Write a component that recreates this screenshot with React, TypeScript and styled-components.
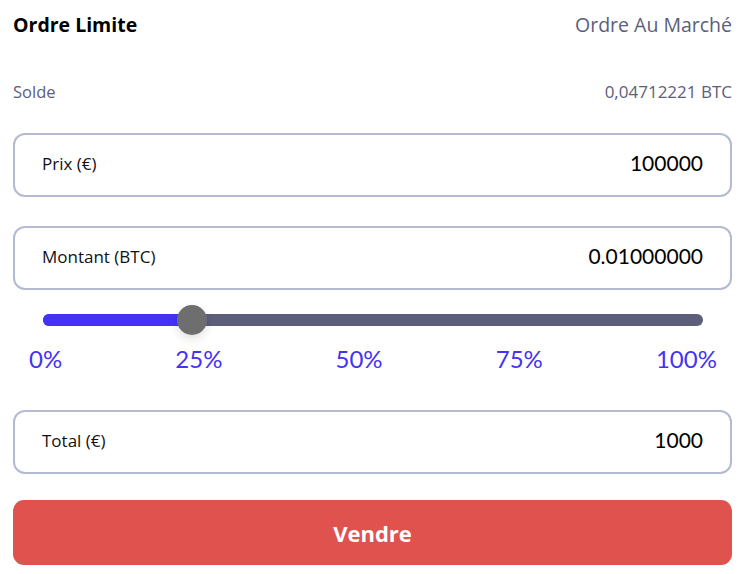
import { useState } from 'react'
import styled, { createGlobalStyle } from 'styled-components'

const GlobalStyle = createGlobalStyle`
	html, body {
		margin: 0;
		padding: 0;
		background: #ffffff;
	}

	* {
		box-sizing: border-box;
	}
`

const OrderWrapper = styled.div`
	width: 744px;
	padding: 0 12px 0 13px;
	display: flex;
	flex-direction: column;
	font-family: 'Open Sans', 'Liberation Sans', sans-serif;
`

const Row = styled.div<{ $height: number; $top?: number }>`
	display: flex;
	justify-content: space-between;
	align-items: center;
	height: ${(p) => p.$height}px;
	margin-top: ${(p) => p.$top ?? 0}px;
`

const Tab = styled.span<{ $active?: boolean }>`
	font-size: ${(p) => (p.$active ? '19.5px' : '19.5px')};
	font-weight: ${(p) => (p.$active ? 700 : 400)};
	color: ${(p) => (p.$active ? '#000000' : '#5c5e7a')};
`

const BalanceText = styled.span<{ $wide?: boolean }>`
	font-size: ${(p) => (p.$wide ? '17px' : '16.5px')};
	color: #5c5e7a;
`

const Field = styled.div<{ $top: number }>`
	height: 64px;
	margin-top: ${(p) => p.$top}px;
	border: 2px solid #b3bad1;
	border-radius: 12px;
	padding: 0 27px 0 27px;
	display: flex;
	justify-content: space-between;
	align-items: center;
`

const FieldLabel = styled.span`
	font-size: 17px;
	color: #111111;
	margin-bottom: 4px;
`

const FieldValue = styled.span`
	font-family: Lato, 'Open Sans', sans-serif;
	font-size: 21px;
	color: #000000;
	margin-bottom: 5px;
`

const SliderArea = styled.div`
	position: relative;
	height: 30px;
	margin-top: 15px;
	padding: 0 29px 0 30px;
	display: flex;
	align-items: center;
`

const Track = styled.div`
	position: relative;
	flex: 1;
	height: 12px;
	border-radius: 6px;
	background: #5c5e7a;
`

const TrackFill = styled.div`
	height: 100%;
	border-radius: 6px 0 0 6px;
	background: #4433f5;
`

const Thumb = styled.div`
	position: absolute;
	top: 50%;
	width: 30px;
	height: 30px;
	margin: -15px 0 0 -15px;
	border-radius: 50%;
	background: #6e6e6e;
	box-shadow: 0 4px 10px rgba(0, 0, 0, 0.12);
`

const Marks = styled.div`
	height: 24px;
	margin-top: 11px;
	padding: 0 15px 0 16px;
	display: flex;
	justify-content: space-between;
	align-items: center;
`

const Mark = styled.span`
	font-family: Lato, 'Open Sans', sans-serif;
	font-size: 24px;
	color: #4433f5;
`

const SellButton = styled.button`
	height: 65px;
	margin-top: 26px;
	border: none;
	border-radius: 11px;
	background: #df524e;
	color: #ffffff;
	font-family: 'Open Sans', 'Liberation Sans', sans-serif;
	font-weight: 700;
	font-size: 22px;
	cursor: pointer;
`

const marks = [0, 25, 50, 75, 100]

const App = () => {
	const [percent] = useState<number>(22.5)

	return (
		<>
			<GlobalStyle />
			<OrderWrapper>
				<Row $height={48}>
					<Tab $active>Ordre Limite</Tab>
					<Tab>Ordre Au Marché</Tab>
				</Row>
				<Row $height={24} $top={31}>
					<BalanceText>Solde</BalanceText>
					<BalanceText $wide>0,04712221 BTC</BalanceText>
				</Row>
				<Field $top={30}>
					<FieldLabel>Prix (€)</FieldLabel>
					<FieldValue>100000</FieldValue>
				</Field>
				<Field $top={29}>
					<FieldLabel>Montant (BTC)</FieldLabel>
					<FieldValue>0.01000000</FieldValue>
				</Field>
				<SliderArea>
					<Track>
						<TrackFill style={{ width: `${percent}%` }} />
						<Thumb style={{ left: `${percent}%` }} />
					</Track>
				</SliderArea>
				<Marks>
					{marks.map((m) => (
						<Mark key={m}>{m}%</Mark>
					))}
				</Marks>
				<Field $top={40}>
					<FieldLabel>Total (€)</FieldLabel>
					<FieldValue>1000</FieldValue>
				</Field>
				<SellButton>Vendre</SellButton>
			</OrderWrapper>
		</>
	)
}

export default App
